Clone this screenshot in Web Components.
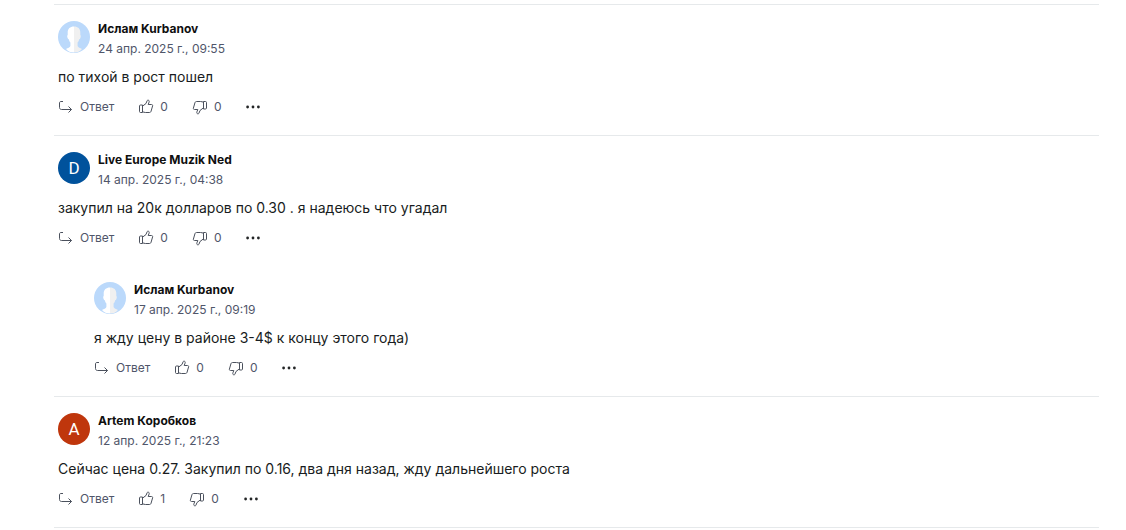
<!DOCTYPE html>
<html lang="ru">
<head>
<meta charset="utf-8">
<title>Комментарии</title>
<style>
body { margin: 0; background: #fff; color: #0f0f0f; font-family: Inter, "Noto Sans", sans-serif; }
</style>
</head>
<body>
<comment-list>
  <comment-card author="Ислам Kurbanov" date="24 апр. 2025 г., 09:55" up="0" down="0">по тихой в рост пошел</comment-card>
  <comment-card author="Live Europe Muzik Ned" date="14 апр. 2025 г., 04:38" initial="D" tint="#00529c" up="0" down="0">закупил на 20к долларов по 0.30 . я надеюсь что угадал<comment-card slot="replies" author="Ислам Kurbanov" date="17 апр. 2025 г., 09:19" up="0" down="0">я жду цену в районе 3-4$ к концу этого года)</comment-card></comment-card>
  <comment-card author="Artem Коробков" date="12 апр. 2025 г., 21:23" initial="A" tint="#bf360c" up="1" down="0">Сейчас цена 0.27. Закупил по 0.16, два дня назад, жду дальнейшего роста</comment-card>
</comment-list>

<script>
class UserAvatar extends HTMLElement {
  connectedCallback() {
    const initial = this.getAttribute('initial');
    const root = this.attachShadow({ mode: 'open' });
    root.innerHTML = `
      <style>
        :host { display: flex; flex: none; width: 32px; height: 32px; border-radius: 50%; overflow: hidden;
          align-items: center; justify-content: center; color: #fff; background: #bbd9fb;
          font: 400 17px/32px Roboto, sans-serif; }
        svg { display: block; width: 32px; height: 32px; }
      </style>
      ${initial ? '<span></span>' : `<svg viewBox="0 0 32 32" aria-hidden="true">
        <path fill="#fff" d="M16 5.500C12 5.500 9.700 7.800 9.700 11.500V14C9 14.200 9.100 15.800 9.600 17c.3.800.6 1.200 1.200 1.200.3 1.500.8 2.600 1.600 3.400V25c-.6 1.400-2.400 2-4.400 3C9.800 30.500 12.800 31.500 16 31.500z"/>
        <path fill="#f0f0f0" d="M16 5.500C20 5.500 22.300 7.800 22.300 11.500V14C23 14.200 22.900 15.800 22.400 17c-.3.800-.6 1.200-1.200 1.200-.3 1.500-.8 2.600-1.600 3.400V25c.6 1.400 2.400 2 4.400 3C22.200 30.500 19.200 31.500 16 31.500z"/>
      </svg>`}`;
    if (initial) {
      root.querySelector('span').textContent = initial;
      this.style.background = this.getAttribute('tint');
    }
  }
}
customElements.define('user-avatar', UserAvatar);

const THUMB = '<path d="M4.500 6H2.500c-.6 0-1 .4-1 1v5.500c0 .6.400 1 1 1h2zM4.500 7.200L8 4.500 9 2c.3-.8.800-1 1.400-.8.800.300 1 1 .7 1.900L10.200 5.500h3.300c.9 0 1.300.6 1.100 1.400l-1.500 5.200c-.3 1-.8 1.400-1.700 1.400H7.500c-1.200 0-1.800-.5-3-.7"/>';
const ICONS = {
  reply: '<path d="M5 2.500H3c-1 0-1.500.5-1.500 1.500v4.500c0 1.200.8 2 2 2h10M10.500 7.500l3 3-3 3"/>',
  up: THUMB,
  down: `<g transform="rotate(180 8 8)">${THUMB}</g>`,
  more: '<g fill="#232526" stroke="none"><circle cx="2.600" cy="8" r="1.400"/><circle cx="8" cy="8" r="1.400"/><circle cx="13.400" cy="8" r="1.400"/></g>'
};

class CommentAction extends HTMLElement {
  connectedCallback() {
    const root = this.attachShadow({ mode: 'open' });
    root.innerHTML = `
      <style>
        :host { display: block; }
        button { display: flex; align-items: center; gap: 6px; height: 24px; margin: 0; padding: 0; border: 0;
          background: none; color: #50566a; font: 400 12px/24px Inter, "Noto Sans", sans-serif; cursor: pointer; }
        svg { display: block; width: 16px; height: 16px; fill: none; stroke: #4b515d; stroke-width: 1; stroke-linejoin: round; }
      </style>
      <button type="button"><svg viewBox="0 0 16 16" aria-hidden="true">${ICONS[this.getAttribute('icon')]}</svg><slot></slot></button>`;
    const label = this.getAttribute('label');
    if (label) root.querySelector('button').setAttribute('aria-label', label);
  }
}
customElements.define('comment-action', CommentAction);

class CommentCard extends HTMLElement {
  connectedCallback() {
    const root = this.attachShadow({ mode: 'open' });
    root.innerHTML = `
      <style>
        :host { display: block; padding: 16px 4px; border-bottom: 1px solid #e6e9eb; }
        :host([slot="replies"]) { padding: 32px 0 0 36px; border: 0; }
        header { display: flex; gap: 8px; margin-bottom: 8px; }
        .name { display: block; margin-bottom: 4px; font-size: 12px; line-height: 16px; font-weight: 700; color: #0f0f0f; }
        time { display: block; font-size: 12px; line-height: 16px; color: #50566a; }
        p { margin: 0 0 6px; font-size: 14px; line-height: 24px; color: #181c21; }
        .actions { display: flex; gap: 24px; }
      </style>
      <article>
        <header>
          <user-avatar></user-avatar>
          <div><span class="name"></span><time></time></div>
        </header>
        <p><slot></slot></p>
        <div class="actions">
          <comment-action icon="reply">Ответ</comment-action>
          <comment-action icon="up"></comment-action>
          <comment-action icon="down"></comment-action>
          <comment-action icon="more" label="Ещё"></comment-action>
        </div>
      </article>
      <slot name="replies"></slot>`;
    const get = name => this.getAttribute(name);
    root.querySelector('.name').textContent = get('author');
    root.querySelector('time').textContent = get('date');
    root.querySelector('[icon=up]').textContent = get('up');
    root.querySelector('[icon=down]').textContent = get('down');
    if (get('initial')) {
      const avatar = document.createElement('user-avatar');
      avatar.setAttribute('initial', get('initial'));
      avatar.setAttribute('tint', get('tint'));
      root.querySelector('user-avatar').replaceWith(avatar);
    }
  }
}
customElements.define('comment-card', CommentCard);

customElements.define('comment-list', class extends HTMLElement {
  connectedCallback() {
    this.attachShadow({ mode: 'open' }).innerHTML = `
      <style>
        :host { display: block; padding: 4px 27px 0 54px; }
        section { border-top: 1px solid #e6e9eb; }
      </style>
      <section aria-label="Комментарии"><slot></slot></section>`;
  }
});
</script>
</body>
</html>
